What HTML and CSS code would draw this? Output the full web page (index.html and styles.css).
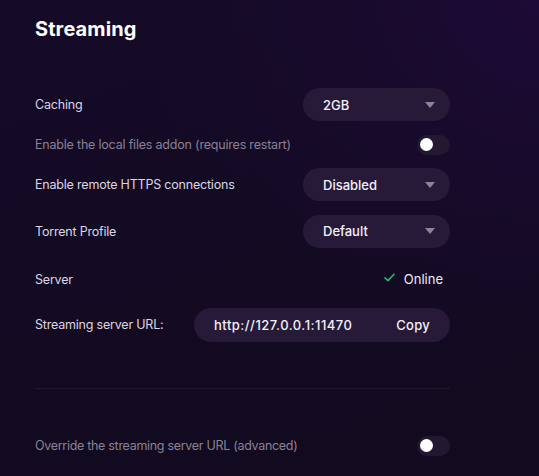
FILE: index.html
```html
<!DOCTYPE html>
<html>
<head>
<meta charset="utf-8">
<link rel="stylesheet" href="styles.css">
</head>
<body>
<div class="page">
  <h1 class="title">Streaming</h1>
  <div class="rows">
    <div class="row r-select">
      <span class="label">Caching</span>
      <div class="select"><span>2GB</span><span class="arrow"></span></div>
    </div>
    <div class="row r-toggle">
      <span class="label dim">Enable the local files addon (requires restart)</span>
      <div class="toggle"><span class="knob"></span></div>
    </div>
    <div class="row r-select">
      <span class="label">Enable remote HTTPS connections</span>
      <div class="select"><span>Disabled</span><span class="arrow"></span></div>
    </div>
    <div class="row r-select">
      <span class="label">Torrent Profile</span>
      <div class="select"><span>Default</span><span class="arrow"></span></div>
    </div>
    <div class="row r-select r-server">
      <span class="label">Server</span>
      <div class="status">
        <svg class="check" width="11" height="9" viewBox="0 0 11 9"><path d="M1 4.8 L4 7.6 L10 1.2" fill="none" stroke="#22b86a" stroke-width="1.6" stroke-linecap="round" stroke-linejoin="round"/></svg>
        <span>Online</span>
      </div>
    </div>
    <div class="row r-url">
      <span class="label">Streaming server URL:</span>
      <div class="url"><span class="url-text">http://127.0.0.1:11470</span><span class="copy">Copy</span></div>
    </div>
  </div>
  <div class="divider"></div>
  <div class="row r-toggle override">
    <span class="label dim override-label">Override the streaming server URL (advanced)</span>
    <div class="toggle"><span class="knob"></span></div>
  </div>
</div>
</body>
</html>
```
FILE: styles.css
```css
html, body {
  margin: 0;
  padding: 0;
}
body {
  width: 539px;
  height: 476px;
  overflow: hidden;
  background: radial-gradient(ellipse 420px 380px at 560px -20px, #1e0a38 0%, #180a2c 50%, rgba(20,10,34,0) 100%), linear-gradient(160deg, #150a28 0%, #130a22 60%, #120a1e 100%);
  font-family: Inter, "Noto Sans", sans-serif;
  color: #ddd8e4;
}
.page {
  padding: 0 89px 0 35px;
}
.title {
  margin: 0;
  padding-top: 17px;
  font-size: 20px;
  line-height: 24px;
  font-weight: 700;
  color: #ffffff;
  letter-spacing: 0.1px;
}
.rows {
  margin-top: 47px;
  display: flex;
  flex-direction: column;
  gap: 13.6px;
}
.row {
  display: flex;
  align-items: center;
  justify-content: space-between;
}
.r-select { height: 33px; }
.r-server { padding-top: 3px; height: 30px; }
.r-toggle { height: 20px; }
.r-url { height: 34px; }
.label {
  font-size: 12.5px;
  letter-spacing: -0.2px;
  color: #dcd6e3;
}
.label.dim { color: #8a8294; }
.override-label { letter-spacing: -0.3px; }
.select {
  width: 147px;
  height: 33px;
  box-sizing: border-box;
  border-radius: 17px;
  background: #261a38;
  display: flex;
  align-items: center;
  justify-content: space-between;
  padding: 0 15px 0 20px;
  font-size: 13px;
  font-weight: 500;
  color: #f4f0f8;
}
.arrow {
  width: 0;
  height: 0;
  border-left: 5px solid transparent;
  border-right: 5px solid transparent;
  border-top: 6px solid #8c8596;
}
.toggle {
  width: 33px;
  height: 20px;
  border-radius: 10px;
  background: #221832;
  display: flex;
  align-items: center;
  padding-left: 3px;
  box-sizing: border-box;
}
.knob {
  width: 13px;
  height: 13px;
  border-radius: 50%;
  background: #ffffff;
}
.status {
  display: flex;
  align-items: center;
  gap: 9px;
  padding-right: 7px;
  font-size: 13px;
  color: #eeeaf4;
}
.check { margin-top: -3px; }
.url {
  width: 256px;
  height: 34px;
  box-sizing: border-box;
  border-radius: 17px;
  background: #261a38;
  display: flex;
  align-items: center;
  justify-content: space-between;
  padding: 0 20px 0 20px;
  font-size: 13px;
  font-weight: 500;
  color: #f4f0f8;
}
.url-text { letter-spacing: 0.5px; }
.copy { letter-spacing: 0.3px; }
.divider {
  margin-top: 46px;
  height: 1px;
  background: #22192f;
}
.override {
  margin-top: 47px;
}
```
